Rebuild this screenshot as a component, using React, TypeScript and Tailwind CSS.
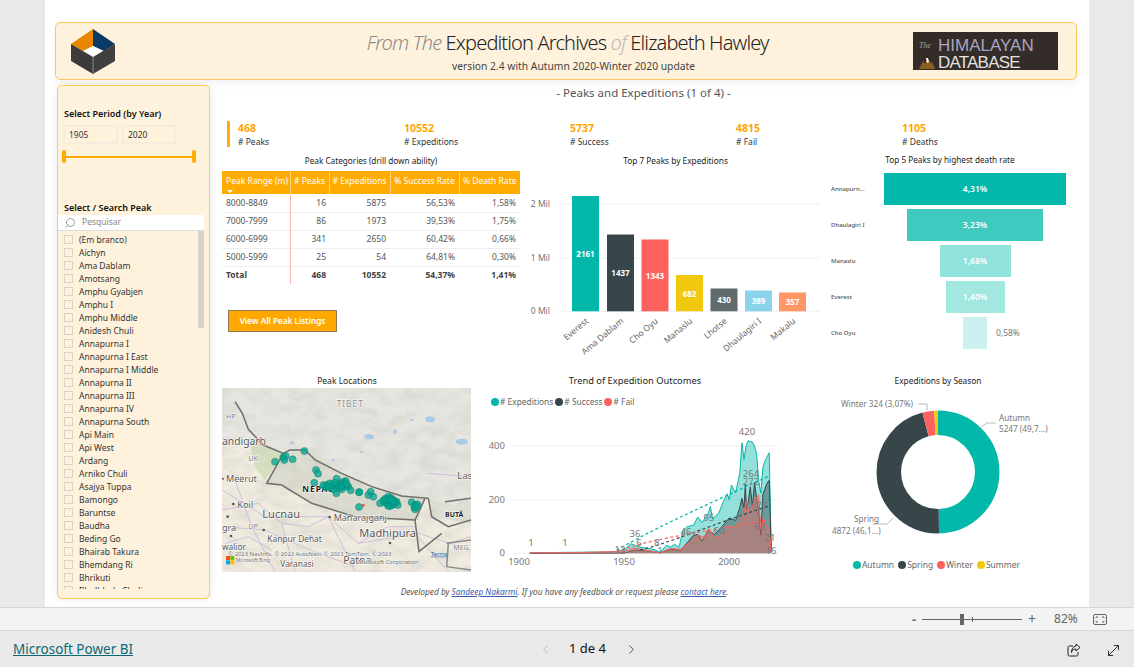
import { ChevronLeft, ChevronRight, MoveDiagonal, Search } from 'lucide-react';

const kpis = [
  { value: '468', label: '# Peaks' },
  { value: '10552', label: '# Expeditions' },
  { value: '5737', label: '# Success' },
  { value: '4815', label: '# Fail' },
  { value: '1105', label: '# Deaths' },
];

const peaks = [
  '(Em branco)', 'Aichyn', 'Ama Dablam', 'Amotsang', 'Amphu Gyabjen', 'Amphu I', 'Amphu Middle', 'Anidesh Chuli',
  'Annapurna I', 'Annapurna I East', 'Annapurna I Middle', 'Annapurna II', 'Annapurna III', 'Annapurna IV',
  'Annapurna South', 'Api Main', 'Api West', 'Ardang', 'Arniko Chuli', 'Asajya Tuppa', 'Bamongo', 'Baruntse',
  'Baudha', 'Beding Go', 'Bhairab Takura', 'Bhemdang Ri', 'Bhrikuti', 'Bhulbhule Chuli',
];

const tableRows = [
  ['8000-8849', '16', '5875', '56,53%', '1,58%'],
  ['7000-7999', '86', '1973', '39,53%', '1,75%'],
  ['6000-6999', '341', '2650', '60,42%', '0,66%'],
  ['5000-5999', '25', '54', '64,81%', '0,30%'],
];

const bars = [
  { name: 'Everest', value: '2161', x: 572, top: 196, color: '#01b8aa', textY: 257 },
  { name: 'Ama Dablam', value: '1437', x: 607, top: 234.5, color: '#374649', textY: 276 },
  { name: 'Cho Oyu', value: '1343', x: 641.5, top: 239.5, color: '#fd625e', textY: 279 },
  { name: 'Manaslu', value: '682', x: 676, top: 275, color: '#f2c80f', textY: 297 },
  { name: 'Lhotse', value: '430', x: 710.5, top: 288.5, color: '#5f6b6d', textY: 303 },
  { name: 'Dhaulagiri I', value: '389', x: 745, top: 290.5, color: '#8ad4eb', textY: 304 },
  { name: 'Makalu', value: '357', x: 779, top: 292.5, color: '#fe9666', textY: 305 },
];

const funnel = [
  { name: 'Annapurn...', value: '4,31%', width: 182, color: 'bg-[#01b8aa]' },
  { name: 'Dhaulagiri I', value: '3,23%', width: 136, color: 'bg-[#40cabf]' },
  { name: 'Manaslu', value: '1,68%', width: 71, color: 'bg-[#91e2db]' },
  { name: 'Everest', value: '1,40%', width: 59, color: 'bg-[#a3e7e1]' },
  { name: 'Cho Oyu', value: '', width: 24, color: 'bg-[#ccf1ee]' },
];

const expeditions: [number, number][] = [
  [1905, 2], [1930, 4], [1945, 5], [1950, 12], [1953, 36], [1955, 30], [1958, 22], [1962, 18], [1965, 12], [1967, 3],
  [1970, 30], [1972, 24], [1974, 34], [1976, 22], [1978, 85], [1980, 100], [1983, 105], [1985, 135], [1987, 115],
  [1990, 150], [1991, 175], [1992, 130], [1995, 150], [1997, 190], [1999, 222], [2000, 200], [2001, 255], [2003, 225],
  [2005, 300], [2006, 412], [2007, 350], [2008, 402], [2009, 420], [2011, 415], [2012, 400], [2013, 370], [2014, 270],
  [2015, 225], [2016, 320], [2017, 345], [2019, 375], [2020, 8],
];
const success: [number, number][] = [
  [1905, 0], [1950, 1], [1955, 12], [1960, 10], [1967, 2], [1972, 15], [1977, 12], [1980, 40], [1983, 68], [1985, 70],
  [1987, 45], [1990, 85], [1993, 70], [1996, 95], [2000, 132], [2003, 122], [2005, 170], [2006, 205], [2007, 170],
  [2007.6, 258], [2008.2, 165], [2009, 190], [2010, 248], [2011, 175], [2012, 264], [2013, 205], [2014, 160],
  [2015, 68], [2016, 220], [2018, 262], [2019, 272], [2020, 6],
];
const fail: [number, number][] = [
  [1905, 2], [1930, 3], [1950, 8], [1955, 20], [1960, 12], [1967, 2], [1972, 18], [1977, 15], [1980, 35], [1985, 68],
  [1988, 60], [1990, 92], [1993, 60], [1996, 65], [2000, 102], [2003, 95], [2005, 122], [2007, 150], [2008, 190],
  [2010, 152], [2012, 200], [2014, 218], [2015, 90], [2016, 130], [2018, 100], [2019, 90], [2020, 6],
];

const yearX = (year: number) => 519.3 + 2.1 * (year - 1900);
const valueY = (value: number) => 553.3 - 0.268 * value;

function linePath(data: [number, number][]) {
  return data.map(([year, value], i) => `${i === 0 ? 'M' : 'L'}${yearX(year).toFixed(1)} ${valueY(value).toFixed(1)}`).join(' ');
}

function areaPath(data: [number, number][]) {
  return `${linePath(data)} L${yearX(2020)} 553.3 L${yearX(1905)} 553.3 Z`;
}

const trendLabels = [
  ['420', 747, 435], ['264', 751, 477], ['272', 751, 485], ['36', 635, 537], ['6', 639, 546], ['1', 531, 546],
  ['1', 565, 546], ['95', 709, 521], ['46', 686, 535], ['60', 719, 534], ['8', 657, 546], ['1', 660, 554],
  ['177', 759, 509], ['68', 760, 530], ['21', 770, 541], ['16', 771, 554], ['13', 620, 553],
] as const;

const mapDots = [
  [268, 243], [180, 275], [205, 262], [212, 258], [208, 270], [233, 268], [303, 300], [309, 311], [298, 338], [433, 366],
  [460, 375], [467, 365], [475, 380], [432, 411], [495, 400], [590, 397], [600, 405], [607, 403], [600, 418], [364, 370],
  [325, 345], [335, 345], [345, 340], [355, 345], [365, 326], [375, 340], [385, 335], [392, 333], [400, 350], [407, 361],
  [345, 352], [355, 358], [368, 355], [380, 358], [392, 350], [330, 350], [364, 345], [372, 348], [350, 348], [340, 350],
  [360, 338], [386, 345], [395, 342], [378, 350], [505, 392], [513, 385], [520, 380], [528, 384], [535, 390], [545, 395],
  [548, 405], [510, 398], [518, 402], [526, 408], [534, 404], [522, 392], [530, 398], [515, 392], [525, 388], [540, 398],
  [520, 408], [536, 396], [508, 390], [432, 367], [598, 412], [606, 410],
];

const mapLabels = [
  ['TIBET', 365, 112, 25, '#8d8780'], ['HP', 33, 146, 21, '#777'], ['andigarh', 21, 226, 31, '#555'], ['UK', 100, 272, 21, '#777'],
  ['Meerut', 33, 336, 27, '#555'], ['NEPAL', 262, 366, 25, '#222'], ['Koil', 67, 414, 27, '#555'], ['Lucnau', 142, 445, 33, '#555'],
  ['UP', 100, 477, 21, '#777'], ['gra', 21, 482, 27, '#555'], ['Kanpur Dehat', 157, 517, 25, '#555'], ['Maharajganj', 356, 454, 27, '#555'],
  ['Madhipura', 433, 500, 33, '#555'], ['walior', 21, 541, 25, '#555'], ['Varanasi', 196, 590, 25, '#555'], ['Patna', 385, 582, 31, '#555'],
  ['BUTÃ', 690, 442, 21, '#222'], ['Las', 727, 326, 29, '#555'], ['MEG', 715, 541, 21, '#777'],
] as const;

function Logo() {
  return (
    <svg viewBox="0 0 46 46" className="w-[46px] h-[46px] ml-[14px] shrink-0">
      <path d="M23 1 V18 L13 23 L1 16 Z" fill="#e98700" />
      <path d="M23 1 L45 16 L34 23 L23 18 Z" fill="#0b3a66" />
      <path d="M23 18 L33 23 L23 29 L13 23 Z" fill="#fff" />
      <path d="M1 16 L23 29 V46 L1 33 Z" fill="#3b3b3b" />
      <path d="M45 16 L23 29 V46 L45 33 Z" fill="#404040" />
      <path d="M23 29 V46" stroke="#888" strokeWidth="1" />
    </svg>
  );
}

function DatabaseLogo() {
  return (
    <div className="w-[145px] h-[38px] bg-[#332c28] mr-[18px] shrink-0 flex flex-col pl-[6px]">
      <div className="flex items-center h-[20px] mt-[4px]">
        <span className="w-[19px] text-[8px] italic text-[#a8a29c] font-['Liberation_Serif',serif]">The</span>
        <span className="text-[17px] leading-[20px] text-[#aaa5c2] font-['Liberation_Sans',sans-serif]">HIMALAYAN</span>
      </div>
      <div className="flex items-center h-[13px]">
        <svg viewBox="0 0 16 12" className="w-[16px] h-[12px] mr-[3px]">
          <path d="M0 12 L4 4 L6 7 L8 1 L12 6 L13 5 L16 12 Z" fill="#8a5e1e" />
          <path d="M7 1 L9 1 L10 5 L8 6 Z" fill="#fff" />
        </svg>
        <span className="text-[17px] leading-[13px] tracking-[-0.8px] text-[#e4e2e0] font-['Liberation_Sans',sans-serif]">DATABASE</span>
      </div>
    </div>
  );
}

function Sidebar() {
  return (
    <aside className="w-[153px] h-[514px] mt-[5px] shrink-0 bg-[#fff2dc] border border-[#ffc85c] rounded-[5px] flex flex-col overflow-hidden shadow-[0_0_8px_rgba(0,0,0,0.08)]">
      <div className="mt-[22px] ml-[6px] text-[9px] leading-[12px] font-semibold text-[#111]">Select Period (by Year)</div>
      <div className="flex gap-[4px] ml-[5px] mt-[5px]">
        <div className="w-[55px] h-[19px] border-2 border-[#f4ecdd] text-[8.5px] leading-[15px] pl-[4px] text-[#333]">1905</div>
        <div className="w-[54px] h-[19px] border-2 border-[#f4ecdd] text-[8.5px] leading-[15px] pl-[4px] text-[#333]">2020</div>
      </div>
      <div className="relative ml-[4px] w-[134px] h-[13px] mt-[6px] flex items-center">
        <div className="w-full h-[2px] bg-[#ffab00]" />
        <div className="absolute left-0 top-0 w-[4px] h-[13px] rounded-[2px] bg-[#ffab00]" />
        <div className="absolute right-0 top-0 w-[4px] h-[13px] rounded-[2px] bg-[#ffab00]" />
      </div>
      <div className="mt-[39px] ml-[6px] text-[9px] leading-[12px] font-semibold text-[#111]">Select / Search Peak</div>
      <div className="mt-[1px] w-[146px] h-[16px] bg-white flex items-center border-b border-[#ddd]">
        <Search size={12} strokeWidth={1.1} className="ml-[6px] -scale-x-100 text-[#555]" />
        <span className="ml-[6px] text-[8.5px] text-[#888]">Pesquisar</span>
      </div>
      <div className="relative flex-1 mb-[9px] overflow-hidden">
        <div className="absolute left-[140px] top-0 w-[6px] h-[97px] bg-[#d8d3c8]" />
        <div className="flex flex-col pt-[2px]">
          {peaks.map((peak) => (
            <div key={peak} className="flex items-center h-[13px] shrink-0 pl-[6px]">
              <span className="w-[9px] h-[9px] border border-[#d8d3c8] shrink-0" />
              <span className="ml-[6px] text-[8.5px] leading-[13px] text-[#333] whitespace-nowrap">{peak}</span>
            </div>
          ))}
        </div>
      </div>
    </aside>
  );
}

function PeakTable() {
  return (
    <div className="w-[298px] shrink-0">
      <div className="h-[12px] text-center text-[8.2px] leading-[12px] text-[#222]">Peak Categories (drill down ability)</div>
      <table className="mt-[4px] w-[298px] table-fixed border-collapse text-[8.5px]">
        <colgroup>
          <col className="w-[68px]" />
          <col className="w-[39px]" />
          <col className="w-[61px]" />
          <col className="w-[69px]" />
          <col className="w-[61px]" />
        </colgroup>
        <thead>
          <tr className="h-[23px] bg-[#ffab00] text-white">
            <th className="relative font-normal text-left pl-[4px] pb-[3px] border-r border-[#ffd27f] whitespace-nowrap">
              Peak Range (m)
              <span className="absolute left-[5px] bottom-[1px] w-0 h-0 border-x-[3px] border-x-transparent border-t-[3px] border-t-white" />
            </th>
            <th className="font-normal text-center pb-[3px] border-r border-[#ffd27f] whitespace-nowrap">{'# Peaks'}</th>
            <th className="font-normal text-center pb-[3px] border-r border-[#ffd27f] whitespace-nowrap">{'# Expeditions'}</th>
            <th className="font-normal text-center pb-[3px] border-r border-[#ffd27f] whitespace-nowrap">{'% Success Rate'}</th>
            <th className="font-normal text-center pb-[3px] whitespace-nowrap">{'% Death Rate'}</th>
          </tr>
        </thead>
        <tbody className="text-[#555]">
          {tableRows.map((row) => (
            <tr key={row[0]} className="h-[18px] border-b border-[#eeeeee]">
              <td className="pl-[4px] pt-[1px] border-r border-[#f8b9ae]">{row[0]}</td>
              <td className="text-right pr-[3px] pt-[1px]">{row[1]}</td>
              <td className="text-right pr-[4px] pt-[1px]">{row[2]}</td>
              <td className="text-right pr-[4px] pt-[1px]">{row[3]}</td>
              <td className="text-right pr-[4px] pt-[1px]">{row[4]}</td>
            </tr>
          ))}
          <tr className="h-[18px] font-bold text-[#444]">
            <td className="pl-[4px] pt-[1px] border-r border-[#f8b9ae]">Total</td>
            <td className="text-right pr-[3px] pt-[1px]">468</td>
            <td className="text-right pr-[4px] pt-[1px]">10552</td>
            <td className="text-right pr-[4px] pt-[1px]">54,37%</td>
            <td className="text-right pr-[4px] pt-[1px]">1,41%</td>
          </tr>
        </tbody>
      </table>
      <button className="ml-[6px] mt-[26px] w-[109px] h-[22px] bg-[#ffa800] border border-[#8d7a50] text-white text-[8.2px] font-semibold">
        View All Peak Listings
      </button>
    </div>
  );
}

function BarChart() {
  return (
    <div className="w-[300px] shrink-0">
      <div className="h-[12px] pl-[11px] text-center text-[8.3px] leading-[12px] text-[#222]">Top 7 Peaks by Expeditions</div>
      <svg viewBox="520 167 300 190" className="block w-[300px] h-[190px]">
        {[204, 258, 311.3].map((y) => (
          <line key={y} x1="559" x2="820" y1={y} y2={y} stroke="#f0f0f0" strokeWidth="1" />
        ))}
        <g fontSize="8.5" fill="#777" textAnchor="end">
          <text x="550" y="207">2 Mil</text>
          <text x="550" y="261">1 Mil</text>
          <text x="550" y="314">0 Mil</text>
        </g>
        {bars.map((bar) => (
          <g key={bar.name}>
            <rect x={bar.x} y={bar.top} width="27" height={311.3 - bar.top} fill={bar.color} />
            <text x={bar.x + 13.5} y={bar.textY} fontSize="8" fontWeight="700" fill="#fff" textAnchor="middle">{bar.value}</text>
            <text
              x={bar.x + 17}
              y="322"
              fontSize="8.5"
              fill="#666"
              textAnchor="end"
              transform={`rotate(-40 ${bar.x + 17} 322)`}
            >
              {bar.name}
            </text>
          </g>
        ))}
      </svg>
    </div>
  );
}

function Funnel() {
  return (
    <div className="flex-1">
      <div className="h-[12px] pl-[3px] text-center text-[8.2px] leading-[10px] text-[#222]">Top 5 Peaks by highest death rate</div>
      <div className="mt-[6px] flex flex-col gap-[4px]">
        {funnel.map((row) => (
          <div key={row.name} className="flex items-center h-[32px]">
            <span className="w-[64px] pl-[11px] text-[6px] font-medium text-[#555] whitespace-nowrap">{row.name}</span>
            <div className="relative w-[182px] h-full flex justify-center">
              <div
                className={`h-full flex items-center justify-center text-[8.5px] font-semibold text-white ${row.color}`}
                style={{ width: row.width }}
              >
                {row.value}
              </div>
              {row.name === 'Cho Oyu' && (
                <span className="absolute left-[112px] top-[10px] text-[8.5px] leading-[12px] text-[#777]">0,58%</span>
              )}
            </div>
          </div>
        ))}
      </div>
    </div>
  );
}

function MapView() {
  return (
    <div className="w-[250px] shrink-0">
      <div className="h-[12px] text-center text-[8.5px] leading-[12px] text-[#222]">Peak Locations</div>
      <svg viewBox="21 55 747 550" className="block mt-[1px] w-[249px] h-[184px] bg-[#e6e5df]">
        <defs>
          <filter id="terrain" x="0" y="0" width="100%" height="100%">
            <feTurbulence type="fractalNoise" baseFrequency="0.018 0.03" numOctaves="4" seed="7" />
            <feColorMatrix values="0 0 0 0 0.55  0 0 0 0 0.54  0 0 0 0 0.5  1.6 0 0 0 -0.62" />
          </filter>
        </defs>
        <path d="M21 240 L100 190 L200 250 L270 240 L380 310 L560 378 L640 385 L650 440 L768 420 L768 605 L21 605 Z" fill="#f0ebdf" />
        <path d="M155 340 L205 250 L270 240 L380 310 L560 378 L630 385 L610 450 L420 440 L290 400 L200 345 Z" fill="#dddcd0" />
        <path d="M100 200 L205 250 L150 330 L120 290 Z" fill="#d5e0bf" />
        <path d="M650 440 L640 385 L700 395 L768 420 L768 460 Z" fill="#dfdfd5" />
        <path d="M21 55 H768 V420 L640 385 L380 310 L270 240 L205 250 L100 190 L21 240 Z" fill="#e6e5df" />
        <rect x="21" y="55" width="747" height="550" filter="url(#terrain)" opacity="0.5" />
        <g fill="#a9cbe8">
          <ellipse cx="462" cy="200" rx="14" ry="8" />
          <ellipse cx="645" cy="148" rx="15" ry="9" />
          <ellipse cx="740" cy="215" rx="18" ry="9" />
          <ellipse cx="232" cy="218" rx="6" ry="5" />
          <ellipse cx="540" cy="185" rx="5" ry="8" />
          <ellipse cx="590" cy="150" rx="6" ry="3" />
          <ellipse cx="440" cy="245" rx="5" ry="3" />
          <ellipse cx="355" cy="270" rx="5" ry="3" />
        </g>
        <g fill="none" stroke="#c9b6dc" strokeWidth="2.5">
          <path d="M21 360 L150 440 L340 440 L430 520 L610 490 L768 540" />
          <path d="M21 470 L150 480 L260 530 L420 590" />
          <path d="M60 330 L110 470 L180 605" />
          <path d="M340 440 L420 605" />
          <path d="M600 490 L700 605" />
          <path d="M640 310 L768 320" />
          <path d="M21 420 L130 400 L200 460 L280 470 L340 440" />
          <path d="M200 460 L240 605" />
          <path d="M430 520 L520 470 L600 470" />
          <path d="M700 520 L768 500" />
          <path d="M30 520 L100 500 L170 540" />
        </g>
        <g fill="none" stroke="#6f6f6f" strokeWidth="4.5">
          <path d="M60 95 L82 130 L100 178 L145 225 L205 250 L225 240 L270 240 L300 270 L380 310 L470 350 L560 378 L640 385 L650 440 L700 470 L768 450" />
          <path d="M205 250 L155 340 L200 345 L290 400 L420 440 L600 450 L630 385" />
          <path d="M600 450 L612 545 L680 490" />
          <path d="M690 395 L768 385" />
          <path d="M695 520 L768 510 M700 520 L695 590 L768 600" stroke="#8a8a8a" />
        </g>
        <g className="[paint-order:stroke]" stroke="#ffffff" strokeWidth="3">
          {mapLabels.map(([text, x, y, size, color]) => (
            <text key={text} x={x} y={y} fontSize={size} fill={color} fontWeight={text === 'NEPAL' || text === 'BUTÃ' ? 700 : 400} letterSpacing={text === 'NEPAL' || text === 'TIBET' ? 3 : 0}>
              {text}
            </text>
          ))}
        </g>
        <g fill="#555">
          <circle cx="55" cy="402" r="4" />
          <circle cx="344" cy="441" r="4" />
          <circle cx="24" cy="326" r="3" />
          <circle cx="38" cy="440" r="4" />
          <circle cx="146" cy="480" r="4" />
          <circle cx="48" cy="498" r="4" />
          <circle cx="525" cy="519" r="4" />
        </g>
        <g>
          {mapDots.map(([cx, cy], i) => (
            <circle key={i} cx={cx} cy={cy} r="10.5" fill="#01a48f" fillOpacity="0.75" stroke="#0b8576" strokeWidth="1.5" />
          ))}
          <circle cx="445" cy="406" r="4" fill="#e24a3b" />
        </g>
        <g className="[paint-order:stroke]" stroke="#ffffff" strokeWidth="2" fill="#666" fontSize="17.5">
          <text x="40" y="557">© 2023 NavInfo, © 2023 AutoNavi, © 2023 TomTom, © 2023</text>
          <text x="62" y="577" fontSize="15">Microsoft Bing</text>
          <text x="430" y="581">Microsoft Corporation</text>
        </g>
        <text x="648" y="557" fontSize="17" fill="#2f5fa8" textDecoration="underline">Terms</text>
        <g>
          <rect x="33" y="558" width="12" height="12" fill="#f25022" />
          <rect x="46" y="558" width="12" height="12" fill="#7fba00" />
          <rect x="33" y="571" width="12" height="12" fill="#00a4ef" />
          <rect x="46" y="571" width="12" height="12" fill="#ffb900" />
        </g>
      </svg>
    </div>
  );
}

function LegendDot({ color, label }: { color: string; label: string }) {
  return (
    <span className="flex items-center gap-[1px]">
      <span className={`w-[8px] h-[8px] rounded-full ${color}`} />
      <span>{label}</span>
    </span>
  );
}

function TrendChart() {
  return (
    <div className="w-[320px] shrink-0">
      <div className="h-[12px] pr-[10px] text-center text-[9.3px] leading-[12px] text-[#222]">Trend of Expedition Outcomes</div>
      <div className="mt-[9px] h-[12px] pl-[11px] flex items-center gap-[2px] text-[8.4px] text-[#666]">
        <LegendDot color="bg-[#01b8aa]" label="# Expeditions" />
        <LegendDot color="bg-[#374649]" label="# Success" />
        <LegendDot color="bg-[#fd625e]" label="# Fail" />
      </div>
      <svg viewBox="480 408 320 174" className="block w-[320px] h-[174px]">
        {[446, 500, 553.3].map((y) => (
          <line key={y} x1="513" x2="778" y1={y} y2={y} stroke="#efefef" strokeWidth="1" />
        ))}
        <g fontSize="9.5" fill="#777" textAnchor="end">
          <text x="505" y="449">400</text>
          <text x="505" y="503">200</text>
          <text x="505" y="556">0</text>
        </g>
        <g fontSize="9.5" fill="#777" textAnchor="middle">
          <text x="519" y="565">1900</text>
          <text x="624" y="565">1950</text>
          <text x="729" y="565">2000</text>
        </g>
        <path d={areaPath(expeditions)} fill="#01b8aa" fillOpacity="0.42" />
        <path d={linePath(expeditions)} fill="none" stroke="#01b8aa" strokeWidth="1" />
        <path d={areaPath(success)} fill="#374649" fillOpacity="0.45" />
        <path d={linePath(success)} fill="none" stroke="#374649" strokeWidth="1" />
        <path d={areaPath(fail)} fill="#fd625e" fillOpacity="0.42" />
        <path d={linePath(fail)} fill="none" stroke="#fd625e" strokeWidth="1" />
        <g fill="none" strokeWidth="1.2" strokeDasharray="3 2.5">
          <path d="M612 553 C650 530 700 508 769 476" stroke="#01b8aa" />
          <path d="M640 550 C670 543 710 525 769 506" stroke="#374649" />
          <path d="M612 553 C640 542 680 535 769 520" stroke="#fd625e" />
        </g>
        <g fontSize="9.5" fill="#777" textAnchor="middle">
          {trendLabels.map(([text, x, y], i) => (
            <text key={i} x={x} y={y}>{text}</text>
          ))}
        </g>
      </svg>
    </div>
  );
}

function DonutChart() {
  return (
    <div className="flex-1">
      <div className="h-[12px] pr-[11px] text-center text-[8.3px] leading-[12px] text-[#222]">Expeditions by Season</div>
      <svg viewBox="810 387 267 171" className="block w-[267px] h-[171px]">
        <g transform="rotate(-90 938 472)" fill="none" strokeWidth="24.5">
          <circle cx="938" cy="472" r="49.2" stroke="#01b8aa" pathLength="10552" strokeDasharray="5247 5305" />
          <circle cx="938" cy="472" r="49.2" stroke="#374649" pathLength="10552" strokeDasharray="4872 5680" strokeDashoffset="-5247" />
          <circle cx="938" cy="472" r="49.2" stroke="#fd625e" pathLength="10552" strokeDasharray="324 10228" strokeDashoffset="-10119" />
          <circle cx="938" cy="472" r="49.2" stroke="#f2c80f" pathLength="10552" strokeDasharray="109 10443" strokeDashoffset="-10443" />
        </g>
        <g fill="none" stroke="#bbb" strokeWidth="1">
          <path d="M981 427 L987 423 H996" />
          <path d="M918 404 H927 V410" />
          <path d="M893 518 L887 524 H873" />
        </g>
        <g fontSize="8.2" fill="#777">
          <text x="999" y="421">Autumn</text>
          <text x="999" y="432">5247 (49,7...)</text>
          <text x="841" y="407">Winter 324 (3,07%)</text>
          <text x="854" y="522">Spring</text>
          <text x="832" y="534">4872 (46,1...)</text>
        </g>
      </svg>
      <div className="h-[14px] pr-[14px] flex items-center justify-center gap-[4px] text-[8.5px] text-[#666]">
        <LegendDot color="bg-[#01b8aa]" label="Autumn" />
        <LegendDot color="bg-[#374649]" label="Spring" />
        <LegendDot color="bg-[#fd625e]" label="Winter" />
        <LegendDot color="bg-[#f2c80f]" label="Summer" />
      </div>
    </div>
  );
}

export default function App() {
  return (
    <div className="h-[667px] w-[1134px] flex flex-col overflow-hidden bg-[#e9e9e9] font-['Noto_Sans','Open_Sans',sans-serif]">
      <div className="h-[607px] flex justify-center shrink-0">
        <div className="w-[1044px] h-full bg-white pt-[22px] pl-[10px] pr-[12px]">
          {/* Banner */}
          <header className="h-[58px] flex items-center justify-between bg-[#fff2dc] border border-[#ffc85c] rounded-[5px] shadow-[0_4px_8px_rgba(0,0,0,0.05)]">
            <Logo />
            <div className="flex flex-col items-center ml-[106px]">
              <div className="mb-[3px] text-[20px] leading-[26px] font-light text-[#222] tracking-[-0.85px]">
                <span className="italic text-[#8c8c8c]">From The</span> Expedition Archives{' '}
                <span className="italic text-[#bbb]">of</span> Elizabeth Hawley
              </div>
              <div className="ml-[12px] text-[10.3px] leading-[14px] text-[#444]">version 2.4 with Autumn 2020-Winter 2020 update</div>
            </div>
            <DatabaseLogo />
          </header>

          <div className="flex pl-[2px]">
            <Sidebar />
            <main className="ml-[12px] flex-1 flex flex-col">
              <div className="mt-[5px] h-[15px] pr-[12px] text-center text-[11.5px] leading-[15px] text-[#555]">
                - Peaks and Expeditions (1 of 4) -
              </div>

              {/* KPI cards */}
              <div className="mt-[21px] ml-[5px] h-[26px] flex">
                {kpis.map((kpi, i) => (
                  <div key={kpi.label} className={`w-[166px] flex flex-col ${i === 0 ? 'pl-[8px] border-l-[3px] border-[#ffab00]' : 'pl-[11px]'}`}>
                    <span className="text-[10.5px] leading-[14px] font-bold text-[#ffa500]">{kpi.value}</span>
                    <span className="text-[8.5px] leading-[14px] text-[#333]">{kpi.label}</span>
                  </div>
                ))}
              </div>

              <div className="mt-[8px] h-[220px] flex">
                <PeakTable />
                <BarChart />
                <Funnel />
              </div>

              <div className="h-[207px] flex">
                <MapView />
                <div className="w-[8px] shrink-0" />
                <TrendChart />
                <div className="w-[10px] shrink-0" />
                <DonutChart />
              </div>

              <div className="mt-[4px] h-[12px] pr-[170px] text-center text-[8.3px] leading-[12px] italic text-[#555] whitespace-nowrap">
                Developed by <span className="underline text-[#3b5bab]">Sandeep Nakarmi</span>. If you have any feedback or request please{' '}
                <span className="underline text-[#3b5bab]">contact here</span>.
              </div>
            </main>
          </div>
        </div>
      </div>

      {/* Zoom bar */}
      <div className="h-[24px] shrink-0 bg-[#f3f3f3] border-y border-[#d6d6d6] flex items-center text-[#666]">
        <span className="ml-[912px] w-[10px] text-[13px] font-bold leading-none">-</span>
        <div className="relative w-[100px] h-[1px] bg-[#666]">
          <span className="absolute left-[38px] -top-[5px] w-[4px] h-[11px] bg-[#666]" />
          <span className="absolute left-[50px] -top-[2px] w-[1px] h-[5px] bg-[#666]" />
        </div>
        <span className="ml-[6px] text-[14px] leading-none">+</span>
        <span className="ml-[18px] text-[12px]">82%</span>
        <svg viewBox="0 0 14 11" className="ml-[15px] w-[14px] h-[11px]" fill="none" stroke="#666" strokeWidth="1">
          <rect x="0.5" y="0.5" width="13" height="10" rx="1.5" />
          <path d="M3 4V3h2M9 3h2v1M3 7v1h2M11 7v1H9" />
        </svg>
      </div>

      {/* Footer bar */}
      <footer className="relative flex-1 flex items-center">
        <span className="ml-[13px] text-[13.5px] text-[#0b6a73] underline">Microsoft Power BI</span>
        <div className="absolute left-[538px] top-0 h-full flex items-center">
          <ChevronLeft size={15} strokeWidth={1.2} className="text-[#aaa]" />
          <span className="ml-[16px] w-[40px] text-[13px] text-[#111]">1 de 4</span>
          <ChevronRight size={15} strokeWidth={1.2} className="ml-[15px] text-[#222]" />
        </div>
        <svg viewBox="0 0 14 14" className="absolute left-[1067px] top-[12px] w-[14px] h-[14px]" fill="none" stroke="#222" strokeWidth="1">
          <path d="M6 3H2.5A1.5 1.5 0 0 0 1 4.500V11.500A1.500 1.500 0 0 0 2.500 13H9.500A1.500 1.500 0 0 0 11 11.500V9" />
          <path d="M9 1l4 3.500L9 8V6C6.500 6 5 7 4.500 9.500 4.500 6 6 3.500 9 3Z" />
        </svg>
        <MoveDiagonal size={17} strokeWidth={1.3} className="absolute left-[1105px] top-[11px] text-[#222]" />
      </footer>
    </div>
  );
}
